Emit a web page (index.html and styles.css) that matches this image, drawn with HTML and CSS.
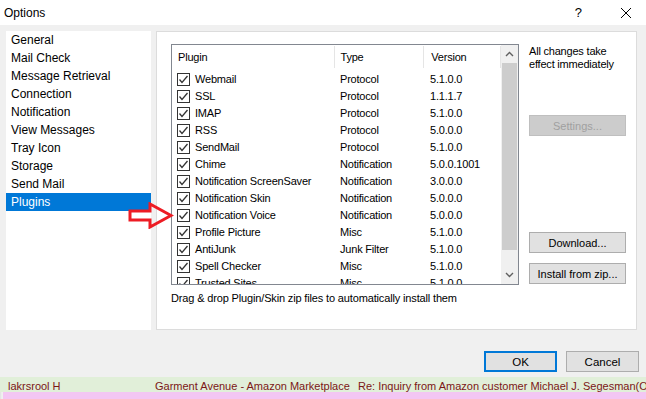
FILE: index.html
```html
<!DOCTYPE html>
<html lang="en">
<head>
    <meta charset="UTF-8">
    <meta name="viewport" content="width=device-width, initial-scale=1.0">
    <title>Options</title>
    <link rel="stylesheet" href="styles.css">
</head>
<body>
    <div class="window">
        <div class="titlebar">
            <span class="title">Options</span>
            <span class="help">?</span>
            <svg class="close" width="12" height="12" viewBox="0 0 12 12"><path d="M1 1L11 11M11 1L1 11" stroke="#000" stroke-width="1"/></svg>
        </div>

        <div class="dialog">
            <div class="content">
                <ul class="nav">
                    <li>General</li>
                    <li>Mail Check</li>
                    <li>Message Retrieval</li>
                    <li>Connection</li>
                    <li>Notification</li>
                    <li>View Messages</li>
                    <li>Tray Icon</li>
                    <li>Storage</li>
                    <li>Send Mail</li>
                    <li class="selected">Plugins</li>
                </ul>

                <div class="panel">
                    <div class="panel-top">
                        <div class="listview">
                            <div class="rows">
                                <div class="row header">
                                    <div class="col-name">Plugin</div>
                                    <div class="col-type">Type</div>
                                    <div class="col-ver">Version</div>
                                </div>
                                <div id="plugin-rows"></div>
                            </div>
                            <div class="scrollbar">
                                <svg class="arrow" width="9" height="6" viewBox="0 0 9 6"><path d="M1 5L4.5 1.5L8 5" fill="none" stroke="#606060" stroke-width="1.4"/></svg>
                                <div class="track"><div class="thumb"></div></div>
                                <svg class="arrow" width="9" height="6" viewBox="0 0 9 6"><path d="M1 1L4.5 4.5L8 1" fill="none" stroke="#606060" stroke-width="1.4"/></svg>
                            </div>
                        </div>

                        <div class="side">
                            <p class="note">All changes take effect immediately</p>
                            <button class="btn settings" disabled>Settings...</button>
                            <div class="side-bottom">
                                <button class="btn">Download...</button>
                                <button class="btn">Install from zip...</button>
                            </div>
                        </div>
                    </div>
                    <p class="hint">Drag &amp; drop Plugin/Skin zip files to automatically install them</p>
                </div>
            </div>

            <div class="footer">
                <button class="btn ok">OK</button>
                <button class="btn">Cancel</button>
            </div>

            <!-- red arrow pointing at Notification Voice -->
            <svg class="pointer" width="46" height="27" viewBox="0 0 46 27">
                <path d="M2 9H22V2L43 13.5L22 25V18H2Z" fill="none" stroke="#ed1c24" stroke-width="3" stroke-linejoin="miter"/>
            </svg>
        </div>

        <div class="mails">
            <div class="mail green">
                <span class="m-from">lakrsrool H</span>
                <span class="m-to">Garment Avenue - Amazon Marketplace</span>
                <span class="m-subj">Re: Inquiry from Amazon customer Michael J. Segesman(Order: 114-6350</span>
            </div>
            <div class="mail pink">
                <span class="m-from">Ishmael Heywood</span>
                <span class="m-to">Hydro Monster - Amazon Marketplace</span>
                <span class="m-subj">Different from what I ordered. Request a replacement item</span>
            </div>
        </div>
    </div>

    <script>
        const plugins = [
            ['Webmail', 'Protocol', '5.1.0.0'],
            ['SSL', 'Protocol', '1.1.1.7'],
            ['IMAP', 'Protocol', '5.1.0.0'],
            ['RSS', 'Protocol', '5.0.0.0'],
            ['SendMail', 'Protocol', '5.1.0.0'],
            ['Chime', 'Notification', '5.0.0.1001'],
            ['Notification ScreenSaver', 'Notification', '3.0.0.0'],
            ['Notification Skin', 'Notification', '5.0.0.0'],
            ['Notification Voice', 'Notification', '5.0.0.0'],
            ['Profile Picture', 'Misc', '5.1.0.0'],
            ['AntiJunk', 'Junk Filter', '5.1.0.0'],
            ['Spell Checker', 'Misc', '5.1.0.0'],
            ['Trusted Sites', 'Misc', '5.1.0.0']
        ];

        const check = '<svg width="11" height="11" viewBox="0 0 11 11"><path d="M1.5 5.5L4 8.5L9.5 2" fill="none" stroke="#333" stroke-width="1.3"/></svg>';
        const list = document.getElementById('plugin-rows');
        plugins.forEach(function (p) {
            const row = document.createElement('div');
            row.className = 'row';
            row.innerHTML =
                '<div class="col-name"><span class="checkbox">' + check + '</span>' + p[0] + '</div>' +
                '<div class="col-type">' + p[1] + '</div>' +
                '<div class="col-ver">' + p[2] + '</div>';
            list.appendChild(row);
        });
    </script>
</body>
</html>
```

FILE: styles.css
```css
body {
    margin: 0;
    font-family: "Liberation Sans", Arial, sans-serif;
    font-size: 12px;
    color: #000;
    background-color: #f0f0f0;
    overflow: hidden;
}
.window {
    width: 646px;
    height: 399px;
    position: relative;
}
.titlebar {
    height: 25px;
    background-color: #fff;
    display: flex;
    align-items: center;
    padding-left: 4px;
}
.title {
    flex: 1;
    font-size: 12px;
}
.help {
    margin-right: 38px;
    font-size: 13px;
}
.close {
    margin-right: 14px;
}

.dialog {
    height: 352px;
    position: relative;
}
.content {
    display: flex;
    padding: 6px 9px 0 6px;
    gap: 5px;
    height: 299px;
}

/* left list */
.nav {
    list-style: none;
    margin: 0;
    padding: 0;
    width: 145px;
    background-color: #fff;
}
.nav li {
    height: 18px;
    line-height: 18px;
    padding-left: 5px;
}
.nav li.selected {
    background-color: #0078d7;
    color: #fff;
}

/* right panel */
.panel {
    flex: 1;
    background-color: #fff;
    border: 1px solid #dcdcdc;
    padding: 12px 10px 0 14px;
    font-size: 11px;
    letter-spacing: -0.2px;
}
.panel-top {
    display: flex;
    gap: 10px;
}
.listview {
    width: 346px;
    height: 239px;
    border: 1px solid #828790;
    display: flex;
    overflow: hidden;
}
.rows {
    flex: 1;
    overflow: hidden;
}
.row {
    display: flex;
    height: 17px;
    line-height: 17px;
    white-space: nowrap;
}
.row.header {
    height: 25px;
    line-height: 25px;
    margin-bottom: 1px;
}
.col-name {
    width: 158px;
    padding-left: 5px;
    display: flex;
    align-items: center;
}
.col-type {
    width: 83px;
    padding-left: 5px;
}
.col-ver {
    width: 69px;
    padding-left: 7px;
}
.header .col-name,
.header .col-type,
.header .col-ver {
    border-right: 1px solid #e5e5e5;
    height: 22px;
    line-height: 22px;
    margin-top: 1px;
}
.header .col-name {
    padding-left: 6px;
    width: 157px;
}
.checkbox {
    width: 11px;
    height: 11px;
    border: 1px solid #333;
    margin-right: 5px;
    display: flex;
    align-items: center;
    justify-content: center;
}

.scrollbar {
    width: 17px;
    background-color: #f0f0f0;
    display: flex;
    flex-direction: column;
    align-items: center;
}
.scrollbar .arrow {
    margin: 6px 0;
}
.track {
    flex: 1;
    width: 100%;
    padding: 0 1px;
    box-sizing: border-box;
}
.thumb {
    height: 187px;
    background-color: #cdcdcd;
}

.side {
    width: 97px;
    display: flex;
    flex-direction: column;
}
.note {
    margin: 0;
    line-height: 13px;
    padding-top: 1px;
}
.btn {
    font-family: inherit;
    font-size: 11px;
    letter-spacing: 0;
    background-color: #e1e1e1;
    border: 1px solid #adadad;
    height: 21px;
    padding: 0;
    color: #000;
}
.settings {
    margin-top: 44px;
    width: 97px;
    color: #a0a0a0;
    background-color: #cccccc;
    border-color: #bfbfbf;
}
.side-bottom {
    margin-top: auto;
    display: flex;
    flex-direction: column;
    gap: 10px;
    padding-bottom: 1px;
}
.side-bottom .btn {
    width: 97px;
}
.hint {
    margin: 7px 0 0;
    letter-spacing: -0.15px;
}

/* bottom buttons */
.footer {
    display: flex;
    justify-content: flex-end;
    gap: 9px;
    padding: 21px 7px 0 0;
}
.footer .btn {
    width: 73px;
    font-size: 11.5px;
}
.footer .ok {
    border: 2px solid #0078d7;
}

.pointer {
    position: absolute;
    left: 128px;
    top: 177px;
}

/* mail list behind the dialog */
.mails {
    position: absolute;
    left: 0;
    right: 0;
    top: 377px;
    bottom: 0;
    box-shadow: inset 0 3px 3px -1px rgba(0, 0, 0, 0.35);
    font-size: 11px;
}
.mail {
    white-space: nowrap;
    color: #7b1616;
    display: flex;
    overflow: hidden;
}
.mail.green {
    background-color: #e1efd9;
    height: 11px;
    padding-top: 4px;
    line-height: 10px;
}
.mail.pink {
    background-color: #f3c6f3;
    height: 7px;
    padding-top: 3px;
    line-height: 18px;
    margin-left: 3px;
}
.m-from {
    width: 147px;
    padding-left: 8px;
    flex-shrink: 0;
}
.m-to {
    width: 203px;
    flex-shrink: 0;
}
.m-subj {
    flex-shrink: 0;
}
```
